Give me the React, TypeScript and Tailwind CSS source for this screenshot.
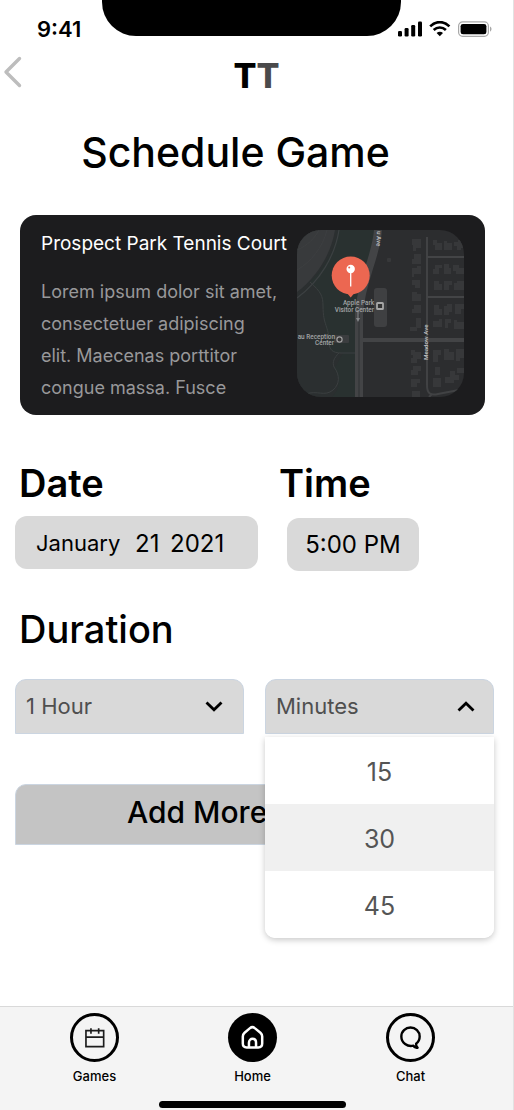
import React, { useState } from "react";

function StatusIcons() {
  return (
    <svg width="94" height="16" viewBox="0 0 94 16" fill="none" aria-hidden="true">
      <g fill="#000">
        <rect x="0" y="10" width="4" height="5.4" rx="1.2" />
        <rect x="6.6" y="7" width="4" height="8.4" rx="1.2" />
        <rect x="13.2" y="4" width="4" height="11.4" rx="1.2" />
        <rect x="20" y="0.6" width="4" height="14.8" rx="1.2" />
      </g>
      <g stroke="#000" strokeWidth="2.6">
        <path d="M32.2 5.3 C37.7 -0.3 45.9 -0.3 51.4 5.3" />
        <path d="M35.7 9 C39.2 5.6 44.4 5.6 47.9 9" />
      </g>
      <path d="M38.6 11.9 C40.4 10.3 43.2 10.3 45 11.9 L41.8 15.2 Z" fill="#000" />
      <rect x="60.6" y="0.9" width="29.8" height="14.4" rx="4" stroke="#a8a8a8" strokeWidth="1.2" />
      <rect x="62.6" y="2.9" width="25.8" height="10.4" rx="2.4" fill="#000" />
      <path d="M92 5.5 C94 6.4 94 9.6 92 10.6 Z" fill="#a8a8a8" />
    </svg>
  );
}

function CourtMap() {
  return (
    <svg viewBox="0 0 167 167" className="block h-full w-full" role="img" aria-label="Map">
      <rect width="167" height="167" fill="#2c2d2f" />
      <path d="M0 0 H81 C79 24 64 50 62 80 V167 H0 Z" fill="#2b2f30" />
      <path d="M41 0 H81 C79 24 64 50 62 80 V123 H40 C28 120 31 105 26 85 C26 68 24 62 13 52 C27 39 38 20 41 0 Z" fill="#293130" />
      <path d="M37 139 C45 150 42 160 35 167 H60 V123 H46 Z" fill="#293130" />
      <path d="M0 0 H38 C34 24 20 47 0 62 Z" fill="#383a3c" />
      <path d="M0 20 C10 16 18 8 22 0 M0 40 C14 32 26 17 30 0" stroke="#3d3f41" strokeWidth="1" fill="none" />
      <path d="M42 0 C38 26 23 51 0 68" stroke="#3c4042" strokeWidth="1.2" fill="none" />
      <g stroke="#3b3f40" strokeWidth="1" fill="none">
        <path d="M13 52 C24 62 26 66 26 76 C26 96 32 96 32 112 C32 120 36 123 44 123 H58" />
        <path d="M42 123 C37 128 35 132 37 137 C43 145 43 154 36 160 C28 167 20 160 9 164" />
      </g>
      <g fill="none">
        <path d="M81 0 C79 28 64 50 62 84 V167" stroke="#434446" strokeWidth="8" />
        <path d="M62 84 V167" stroke="#2f3032" strokeWidth="1" />
        <path d="M66 110 H167" stroke="#434446" strokeWidth="4" />
        <path d="M130 7 V155 C130 163 133 166 141 164 L167 159" stroke="#414244" strokeWidth="2" />
        <path d="M130 27 H167 M130 67 H167" stroke="#434446" strokeWidth="2" />
        <path d="M132 167 L135 164" stroke="#414244" strokeWidth="2" />
      </g>
      <g fill="#37383a">
        <path d="M115 9 h9 v9 h-5 v3 h-3 v-6 h-1 Z M117 24 h7 v10 h-9 v-5 h2 Z M115 38 h5 v-2 h4 v8 h-7 v3 h-2 Z M115 50 h8 v8 h-5 v-3 h-3 Z M115 62 h5 v2 h4 v7 h-9 Z M117 75 h7 v8 h-9 v-4 h2 Z M119 88 h5 v10 h-4 v3 h-7 v-4 h6 Z" />
        <path d="M114 120 h4 v2 h6 v7 h-4 v4 h-6 v-5 h2 v-3 h-2 Z M116 136 h8 v5 h-3 v4 h-7 v-5 h2 Z M114 149 h9 v4 h-3 v4 h-6 Z M115 161 h8 v6 h-8 Z" />
        <path d="M136 10 h4 v3 h5 v7 h-7 v-5 h-2 Z M147 11 h3 v2 h5 v7 h-8 Z M157 12 h4 v-2 h6 v8 h-3 v2 h-4 v-4 h-3 Z" />
        <path d="M138 35 h7 v3 h-3 v6 h-6 v-5 h2 Z M147 34 h5 v4 h2 v6 h-7 Z M156 35 h6 v3 h5 v6 h-8 v-3 h-3 Z M137 51 h5 v3 h3 v6 h-8 Z M147 51 h8 v4 h-3 v5 h-5 Z M157 53 h3 v-2 h7 v9 h-10 Z" />
        <path d="M137 75 h5 v4 h3 v6 h-8 Z M147 76 h3 v-2 h5 v8 h-3 v3 h-5 Z M158 74 h9 v5 h-3 v5 h-6 Z M136 91 h6 v-2 h3 v8 h-9 Z M148 89 h6 v4 h-3 v5 h-3 Z M157 90 h3 v2 h7 v7 h-10 Z" />
        <path d="M136 120 h8 v5 h-3 v7 h-5 Z M147 119 h5 v3 h5 v8 h-10 Z M159 119 h8 v9 h-4 v3 h-4 Z M138 137 h5 v8 h-5 Z M136 148 h8 v9 h-8 Z M148 147 h5 v-6 h5 v4 h4 v5 h-5 v3 h-9 Z M160 138 h7 v5 h-7 Z" />
        <rect x="90" y="28" width="4" height="4" rx="1" />
      </g>
      <rect x="77" y="58" width="13" height="39" rx="3" fill="#3f4042" />
      <rect x="80" y="73" width="6" height="6" rx="0.6" fill="#333" stroke="#a7a7a7" strokeWidth="1.8" />
      <rect x="37" y="105" width="15" height="8" rx="1" fill="#3b3d3f" />
      <circle cx="42.5" cy="109.5" r="2.6" fill="#333" stroke="#a0a0a0" strokeWidth="1.2" />
      <path d="M61 80 V89" stroke="#85888a" strokeWidth="1" />
      <path d="M59 88 H63 L61 92 Z" fill="#85888a" />
      <g fill="#a3a5a6" fontFamily="Roboto, sans-serif" fontSize="6.4" fontWeight="500" textAnchor="end">
        <text x="77" y="75">Apple Park</text>
        <text x="77" y="81.5">Visitor Center</text>
        <text x="38" y="109">au Reception</text>
        <text x="37" y="115">Center</text>
      </g>
      <g fill="#c2c3c4" fontFamily="Roboto, sans-serif" fontSize="6.2" fontWeight="500">
        <text transform="translate(80 1) rotate(92)">u Ave</text>
        <text transform="translate(131 130) rotate(-90)">Meadow Ave</text>
      </g>
      <path d="M50 63 L53.7 67.4 L57.4 63 Z" fill="#ec6751" />
      <circle cx="53.7" cy="45.5" r="19" fill="#ec6751" />
      <path d="M53.7 41 V56.5" stroke="#fff" strokeWidth="1.3" />
      <circle cx="53.7" cy="39" r="4.2" fill="#fff" />
      <circle cx="52.2" cy="37.4" r="1" fill="#ec6751" />
    </svg>
  );
}

function Chevron({ up = false }: { up?: boolean }) {
  return (
    <svg width="18" height="12" viewBox="0 0 18 12" fill="none" stroke="#000" strokeWidth="2.8" aria-hidden="true">
      <path d={up ? "M1.5 9.6 L9 2.2 L16.5 9.6" : "M1.5 1.4 L9 8.8 L16.5 1.4"} />
    </svg>
  );
}

const tabs = [
  {
    label: "Games",
    active: false,
    icon: (
      <g stroke="#1c1c1c" strokeWidth="1.6">
        <path d="M3.8 5.4 H20.8 V20.8 H3.8 Z M3.8 11.6 H20.8 M8.6 3 V8.4 M16 3 V8.4" />
      </g>
    ),
  },
  {
    label: "Home",
    active: true,
    icon: (
      <g stroke="#fff" strokeWidth="2.4" strokeLinejoin="round">
        <path d="M2.7 11 C2.7 9.4 3.3 8.4 4.4 7.4 L9.6 3 C11 1.8 12.8 1.8 14.2 3 L19.6 7.4 C20.7 8.4 21.3 9.4 21.3 11 V17.8 C21.3 20.2 20 21.5 17.6 21.5 H6.4 C4 21.5 2.7 20.2 2.7 17.8 Z" />
        <path d="M8.6 21 V17 C8.6 12 15.4 12 15.4 17 V21" />
      </g>
    ),
  },
  {
    label: "Chat",
    active: false,
    icon: (
      <path
        d="M14.8 19.8 C9 21.2 3.2 17.2 3.2 11 C3.2 6 7.2 2.4 12 2.4 C16.8 2.4 20.8 6.2 20.8 11 C20.8 14.2 19.4 16.4 17.4 17.9 C17.2 19.6 17.6 20.8 18.8 21.8 C17 22.2 15.6 21.4 14.8 19.8 Z"
        stroke="#000"
        strokeWidth="2.3"
        strokeLinejoin="round"
      />
    ),
  },
];

export default function App() {
  const [minutes, setMinutes] = useState("30");
  const [open, setOpen] = useState(true);

  return (
    <div className="flex min-h-screen flex-col border-r border-[#e2e2e2] bg-white font-['Inter',sans-serif] text-black">
      <header>
        <div className="relative flex h-11 items-start justify-between pr-[21px] pl-[37px]">
          <div className="absolute top-0 right-[112px] left-[102px] h-9 rounded-b-[34px] bg-black" />
          <span className="pt-[15px] text-[22px] leading-7 font-semibold">9:41</span>
          <div className="relative pt-[21px]">
            <StatusIcons />
          </div>
        </div>
        <div className="grid h-16 grid-cols-[1fr_auto_1fr] items-center">
          <button type="button" aria-label="Back" className="ml-[3px] justify-self-start pb-2">
            <svg width="20" height="32" viewBox="0 0 20 32" fill="none" aria-hidden="true">
              <path d="M16.5 2.5 L3 16 L16.5 29.5" stroke="#bdbdbd" strokeWidth="3.4" strokeLinecap="round" strokeLinejoin="round" />
            </svg>
          </button>
          <div className="text-[34px] leading-9 font-extrabold">
            T<span className="text-[#4a4a4b]">T</span>
          </div>
        </div>
      </header>

      <main className="flex-1">
        <h1 className="pt-5 pr-[42px] text-center text-[41px] leading-12 font-medium">Schedule Game</h1>

        <section className="mt-[39px] mr-7 ml-5 flex min-h-[200px] rounded-2xl bg-[#1c1c1e] px-[21px]">
          <div className="min-w-0 flex-1">
            <h2 className="mt-[17px] text-[19px] leading-6 whitespace-nowrap text-white">Prospect Park Tennis Court</h2>
            <p className="mt-5 text-lg leading-8 text-[#98989a]">
              Lorem ipsum dolor sit amet,
              <br />
              consectetuer adipiscing
              <br />
              elit. Maecenas porttitor
              <br />
              congue massa. Fusce
            </p>
          </div>
          <div className="mt-[15px] h-[167px] w-[167px] shrink-0 overflow-hidden rounded-3xl">
            <CourtMap />
          </div>
        </section>

        <div className="mt-11 flex gap-[21px] pl-[15px]">
          <fieldset>
            <legend className="pl-1 text-[38px] leading-12 font-semibold">Date</legend>
            <div className="mt-[9px] flex h-[53px] w-[243px] items-center rounded-[12px] bg-[#d9d9d9] pt-0.5 pl-[21px] text-2xl">
              <input
                aria-label="Month"
                defaultValue="January"
                className="w-[99px] bg-transparent text-[22px] outline-none"
              />
              <input aria-label="Day" defaultValue="21" className="w-[35px] bg-transparent outline-none" />
              <input aria-label="Year" defaultValue="2021" className="w-[62px] bg-transparent outline-none" />
            </div>
          </fieldset>
          <div>
            <label htmlFor="time" className="block text-[38px] leading-12 font-semibold">
              Time
            </label>
            <input
              id="time"
              defaultValue="5:00 PM"
              className="mt-[11px] ml-2 block h-[53px] w-[132px] rounded-[12px] bg-[#d9d9d9] text-center text-2xl outline-none"
            />
          </div>
        </div>

        <h2 className="mt-[34px] pl-[19px] text-[38px] leading-12 font-medium">Duration</h2>

        <div className="mt-[26px] flex gap-[21px] pr-[19px] pl-[15px] text-[22px] text-[#4f4f4f]">
          <div className="relative flex-1">
            <select
              aria-label="Hours"
              className="block h-[55px] w-full appearance-none rounded-t-[11px] border border-[#cbd5e1] bg-[#d9d9d9] pl-2.5 outline-none"
            >
              <option>1 Hour</option>
              <option>2 Hours</option>
            </select>
            <div className="pointer-events-none absolute inset-y-0 right-[21px] flex items-center">
              <Chevron />
            </div>
          </div>
          <div className="relative flex-1">
            <button
              type="button"
              aria-haspopup="listbox"
              aria-expanded={open}
              onClick={() => setOpen(!open)}
              className="flex h-[55px] w-full items-center justify-between rounded-t-[11px] border border-[#cbd5e1] bg-[#d9d9d9] pr-[18px] pl-2.5"
            >
              Minutes
              <Chevron up />
            </button>
            {open && (
              <ul
                role="listbox"
                aria-label="Minutes"
                className="absolute inset-x-0 top-[58px] z-10 overflow-hidden rounded-b-[10px] bg-white text-[25px] text-[#555] shadow-[0_2px_6px_rgba(0,0,0,0.22)]"
              >
                {["15", "30", "45"].map((value) => (
                  <li key={value} role="option" aria-selected={value === minutes}>
                    <button
                      type="button"
                      onClick={() => setMinutes(value)}
                      className={
                        value === minutes
                          ? "block h-[67px] w-full bg-[#f0f0f0] pt-[5px]"
                          : "block h-[67px] w-full bg-white pt-[5px]"
                      }
                    >
                      {value}
                    </button>
                  </li>
                ))}
              </ul>
            )}
          </div>
        </div>

        <div className="mt-[50px] pr-[19px] pl-[15px]">
          <button
            type="button"
            className="block h-[61px] w-full rounded-t-[11px] border border-[#cbd5e1] bg-[#c4c4c4] pb-1.5 pl-[111px] text-left text-[30px] leading-10 font-medium"
          >
            Add More
          </button>
        </div>
      </main>

      <nav className="border-t border-[#d9d9d9] bg-[#f4f4f4]">
        <ul className="flex justify-between pt-1.5 pr-[78px] pl-[70px]">
          {tabs.map((tab) => (
            <li key={tab.label}>
              <a href={"#" + tab.label.toLowerCase()} className="flex w-[49px] flex-col items-center">
                <span
                  className={
                    tab.active
                      ? "flex h-[49px] w-[49px] items-center justify-center rounded-full bg-black"
                      : "flex h-[49px] w-[49px] items-center justify-center rounded-full border-[3px] border-black"
                  }
                >
                  <svg width="25" height="25" viewBox="0 0 24 24" fill="none" aria-hidden="true">
                    {tab.icon}
                  </svg>
                </span>
                <span className="mt-1 text-[13px] leading-5 font-medium">{tab.label}</span>
              </a>
            </li>
          ))}
        </ul>
        <div className="mt-[15px] mr-[167px] mb-0.5 ml-[159px] h-[7px] rounded-full bg-black" />
      </nav>
    </div>
  );
}
